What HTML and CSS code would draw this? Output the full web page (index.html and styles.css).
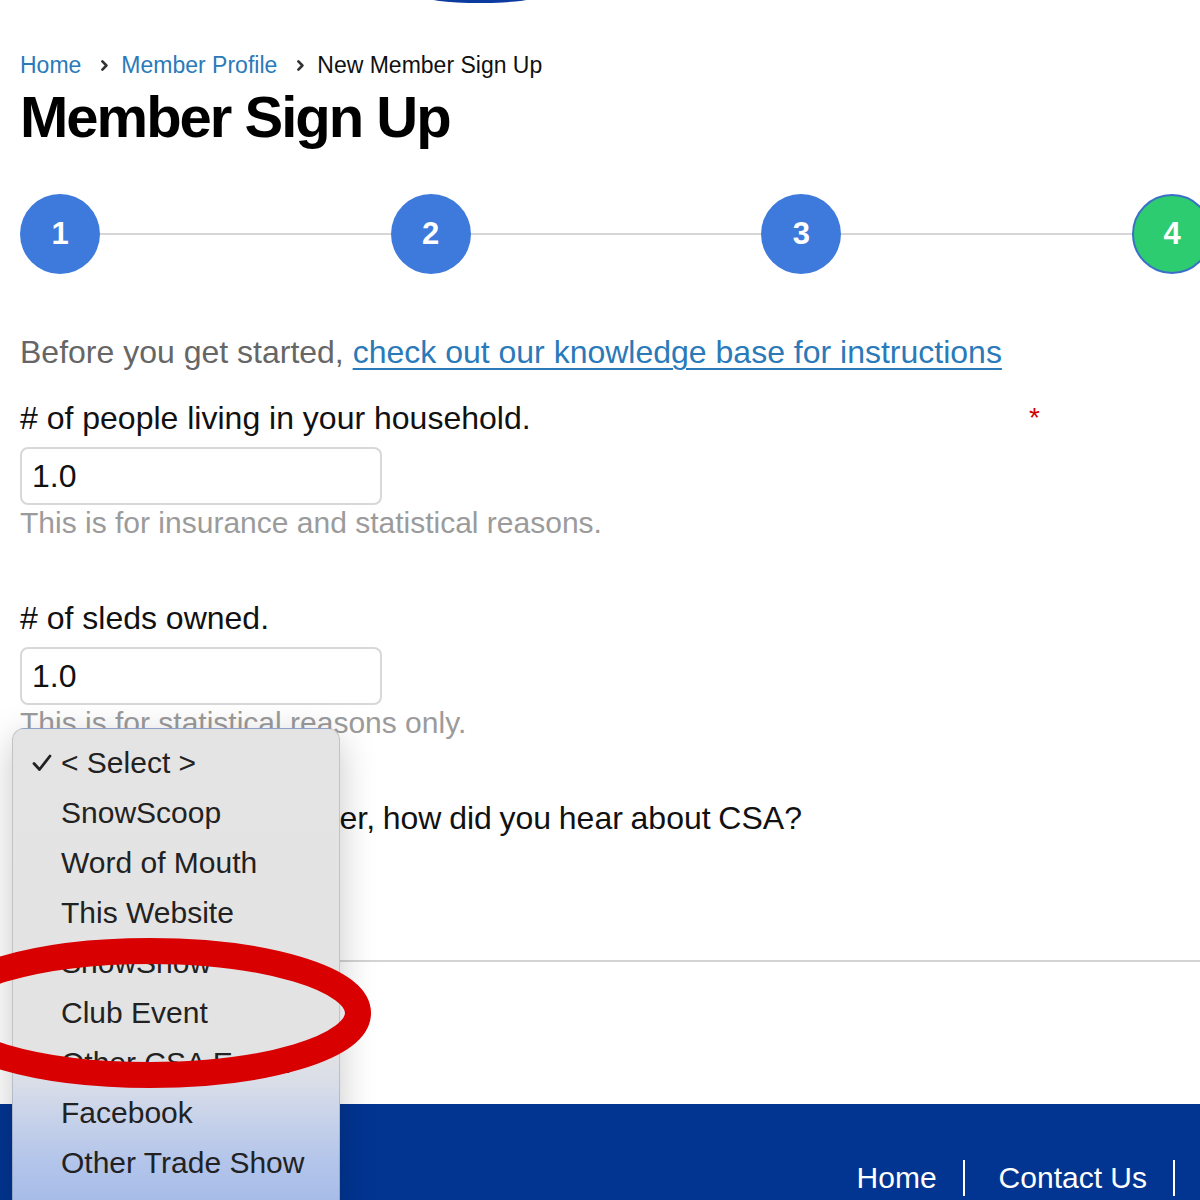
FILE: index.html
```html
<!DOCTYPE html>
<html lang="en">
<head>
<meta charset="utf-8">
<title>Member Sign Up</title>
<link rel="stylesheet" href="styles.css">
</head>
<body>
<div class="logo-edge"></div>
<div class="page">
  <nav class="breadcrumb">
    <a href="#">Home</a>
    <svg class="chev" viewBox="0 0 7 11"><path d="M1.4 1.4 L5.4 5.5 L1.4 9.6" fill="none" stroke="#333" stroke-width="2.6" stroke-linecap="round" stroke-linejoin="round"/></svg>
    <a href="#">Member Profile</a>
    <svg class="chev" viewBox="0 0 7 11"><path d="M1.4 1.4 L5.4 5.5 L1.4 9.6" fill="none" stroke="#333" stroke-width="2.6" stroke-linecap="round" stroke-linejoin="round"/></svg>
    <span class="current">New Member Sign Up</span>
  </nav>
  <h1 class="title">Member Sign Up</h1>
  <div class="steps">
    <div class="step">1</div>
    <div class="step-line"></div>
    <div class="step">2</div>
    <div class="step-line"></div>
    <div class="step">3</div>
    <div class="step-line"></div>
    <div class="step step-current">4</div>
  </div>
  <p class="intro">Before you get started, <a href="#">check out our knowledge base for instructions</a></p>
  <div class="field">
    <div class="label-row"><label># of people living in your household.</label><span class="req">*</span></div>
    <input class="num-input" type="text" value="1.0" readonly>
    <div class="help">This is for insurance and statistical reasons.</div>
  </div>
  <div class="field">
    <div class="label-row"><label># of sleds owned.</label></div>
    <input class="num-input" type="text" value="1.0" readonly>
    <div class="help">This is for statistical reasons only.</div>
  </div>
  <div class="field">
    <div class="label-row label-tight"><label>If you are a new member, how did you hear about CSA?</label></div>
  </div>
</div>
<hr class="divider">
<footer class="footer">
  <nav class="footer-nav">
    <a href="#">Home</a>
    <span class="sep"></span>
    <a href="#">Contact Us</a>
    <span class="sep sep-last"></span>
  </nav>
</footer>

<div class="menu">
  <div class="menu-item">
    <svg class="check" viewBox="0 0 20 18"><path d="M2 9.5 L7.5 15.5 L18 2" fill="none" stroke="#222" stroke-width="2.8" stroke-linecap="round" stroke-linejoin="round"/></svg>
    &lt; Select &gt;
  </div>
  <div class="menu-item">SnowScoop</div>
  <div class="menu-item">Word of Mouth</div>
  <div class="menu-item">This Website</div>
  <div class="menu-item">SnowShow</div>
  <div class="menu-item">Club Event</div>
  <div class="menu-item">Other CSA Event</div>
  <div class="menu-item">Facebook</div>
  <div class="menu-item">Other Trade Show</div>
  <div class="menu-item">Other</div>
</div>

<svg class="annotation" viewBox="0 0 1200 1200" width="1200" height="1200">
  <ellipse cx="150" cy="1013" rx="208" ry="62" fill="none" stroke="#d80000" stroke-width="26"/>
</svg>
</body>
</html>
```

FILE: styles.css
```css
html, body {
  margin: 0;
  padding: 0;
  overflow: hidden;
  background: #fff;
}

body {
  position: relative;
  width: 1200px;
  height: 1200px;
  font-family: "Liberation Sans", Arial, Helvetica, sans-serif;
  color: #111;
}

.logo-edge {
  position: absolute;
  left: 420px;
  top: -13px;
  width: 120px;
  height: 16px;
  border-radius: 50%;
  background: #0b3b9e;
}

.page {
  padding-left: 20px;
  width: 1192px;
}

/* Breadcrumb */
.breadcrumb {
  display: flex;
  align-items: center;
  height: 30px;
  margin-top: 50px;
  font-size: 23px;
  white-space: nowrap;
}

.breadcrumb a {
  color: #2a7ab9;
  text-decoration: none;
}

.chev {
  width: 7px;
  height: 11px;
  margin: 0 13px 0 20px;
  flex: none;
}

.current {
  color: #111;
}

.title {
  margin: 8px 0 0;
  height: 58px;
  font-size: 58px;
  line-height: 58px;
  font-weight: 700;
  letter-spacing: -2px;
  color: #000;
}

/* Steps */
.steps {
  display: flex;
  align-items: center;
  margin-top: 48px;
  width: 1192px;
}

.step {
  flex: none;
  width: 80px;
  height: 80px;
  box-sizing: border-box;
  border-radius: 50%;
  background: #3d7adb;
  color: #fff;
  font-weight: 700;
  font-size: 31px;
  display: flex;
  align-items: center;
  justify-content: center;
}

.step-current {
  background: #2ecc71;
  border: 2px solid #3a70c8;
}

.step-line {
  flex: 1;
  height: 2px;
  background: #d6d6d6;
}

/* Form */
.intro {
  margin: 58px 0 0;
  font-size: 32px;
  line-height: 40px;
  color: #666;
  white-space: nowrap;
}

.intro a {
  color: #2a7ab9;
  text-decoration: underline;
  text-decoration-thickness: 2px;
  text-underline-offset: 5px;
}

.field {
  margin-top: 26px;
}

.field + .field {
  margin-top: 57px;
}

.label-row {
  display: flex;
  justify-content: space-between;
  width: 1020px;
  font-size: 32px;
  line-height: 40px;
  color: #111;
  white-space: nowrap;
}

.label-tight {
  word-spacing: -1.2px;
}

.req {
  color: #d40000;
  font-size: 28px;
}

.num-input {
  display: block;
  margin-top: 9px;
  width: 362px;
  height: 58px;
  box-sizing: border-box;
  border: 2px solid #d8d8d8;
  border-radius: 8px;
  padding: 0 10px;
  font-family: "Liberation Sans", Arial, Helvetica, sans-serif;
  font-size: 32px;
  color: #111;
  background: #fff;
  outline: none;
}

.help {
  font-size: 30px;
  line-height: 36px;
  color: #9b9b9b;
  white-space: nowrap;
}

.divider {
  margin: 122px 0 0;
  border: 0;
  height: 2px;
  background: #d3d3d3;
}

/* Footer */
.footer {
  margin-top: 142px;
  height: 120px;
  background: #023592;
  padding-top: 56px;
  box-sizing: border-box;
}

.footer-nav {
  display: flex;
  justify-content: flex-end;
  align-items: center;
  padding-right: 25px;
}

.footer-nav a {
  color: #fff;
  font-size: 30px;
  line-height: 36px;
  text-decoration: none;
}

.sep {
  width: 2px;
  height: 36px;
  background: #fff;
  margin: 0 34px 0 26px;
}

.sep-last {
  margin-right: 0;
}

/* Open select menu */
.menu {
  position: absolute;
  left: 12px;
  top: 728px;
  width: 328px;
  height: 520px;
  box-sizing: border-box;
  padding-top: 9px;
  border: 1px solid rgba(0, 0, 0, 0.14);
  border-radius: 12px;
  background: linear-gradient(to bottom,
    #e4e4e4 0px,
    #e3e3e3 320px,
    #d8dde8 355px,
    #c7d2ea 390px,
    #b3c5ea 432px,
    #a8bce8 470px);
  box-shadow: 0 10px 36px rgba(0, 0, 0, 0.22);
  font-size: 30px;
  color: #222;
}

.menu-item {
  position: relative;
  height: 50px;
  line-height: 50px;
  padding-left: 48px;
  white-space: nowrap;
}

.check {
  position: absolute;
  left: 19px;
  top: 16px;
  width: 20px;
  height: 18px;
}

/* Annotation */
.annotation {
  position: absolute;
  left: 0;
  top: 0;
  width: 1200px;
  height: 1200px;
  pointer-events: none;
}
```
